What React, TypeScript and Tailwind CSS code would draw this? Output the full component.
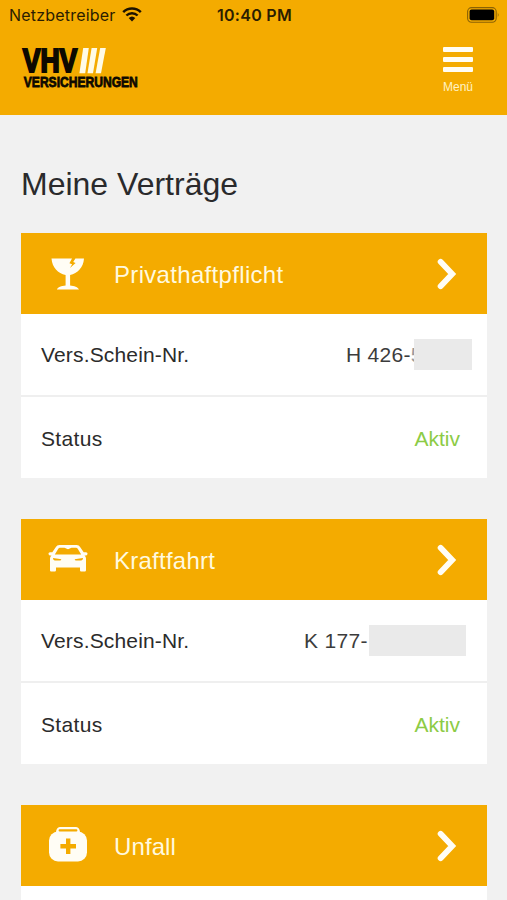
import { type ReactNode } from 'react';

type Contract = {
  title: string;
  titleClass: string;
  icon: ReactNode;
  number?: ReactNode;
};

function WifiIcon() {
  return (
    <svg width="20" height="15" viewBox="0 0 20 15" fill="none">
      <path d="M1.2 5.2A12.6 12.6 0 0 1 18.8 5.2" stroke="#1c1300" strokeWidth="2.5" />
      <path d="M4.4 8.5A8 8 0 0 1 15.6 8.5" stroke="#1c1300" strokeWidth="2.4" />
      <path d="M6.7 11.1A4.8 4.8 0 0 1 13.3 11.1L10 14.4Z" fill="#1c1300" />
    </svg>
  );
}

function BatteryIcon() {
  return (
    <svg width="33" height="16" viewBox="0 0 33 16" fill="none">
      <rect x="0.6" y="0.6" width="28.6" height="14.6" rx="4" stroke="#8a6205" strokeWidth="1.1" />
      <rect x="2.6" y="2.6" width="24.6" height="10.6" rx="2" fill="#000" />
      <path d="M30.8 5.6Q32.4 7.9 30.8 10.2Z" fill="#8a6205" />
    </svg>
  );
}

function Logo() {
  return (
    <svg
      className="overflow-visible"
      width="118"
      height="42"
      viewBox="0 0 118 42"
      fontFamily="'Liberation Sans', Arial, sans-serif"
      fontWeight="700"
    >
      <text x="1.8" y="25.3" fontSize="34" textLength="54.5" lengthAdjust="spacingAndGlyphs" fill="#0d0900" stroke="#0d0900" strokeWidth="2.2">VHV</text>
      <g fill="#fffbe6">
        <path d="M62.2 1H67.8L64.2 26.2H58.4Z" />
        <path d="M70.6 1H76.2L72 26.2H66.5Z" />
        <path d="M79.2 1H84.8L80 26.2H74.6Z" />
      </g>
      <text x="2.8" y="40.1" fontSize="15.2" textLength="114" lengthAdjust="spacingAndGlyphs" fill="#0d0900" stroke="#0d0900" strokeWidth="0.8">VERSICHERUNGEN</text>
    </svg>
  );
}

function GlassIcon() {
  return (
    <svg width="40" height="40" viewBox="0 0 40 40" fill="#fffdf5">
      <path d="M3.5 4.5H24L21.4 9.3L24.1 10.3L22 14.1L27.6 9L25.2 8L27.4 4.5H36C35.4 13.5 29.5 19.6 22.1 21V31.4C26.2 31.9 30 32.8 31 35.5H8.8C9.8 32.8 13.4 31.9 17.6 31.4V21C10 19.5 4.2 13.5 3.5 4.5Z" />
    </svg>
  );
}

function CarIcon() {
  return (
    <svg width="40" height="40" viewBox="0 1 40 40">
      <path
        fill="#fffdf5"
        fillRule="evenodd"
        d="M11.4 6H28.6C30.3 6 31.3 6.7 32.1 8L35.7 13.3H38C40 13.3 40 16.4 38 16.4H36.5C37.5 17.4 38 18.5 38 20V31C38 32 37.4 32.6 36.4 32.6H33.6C32.6 32.6 32 32 32 31V28.5H8V31C8 32 7.4 32.6 6.4 32.6H3.6C2.6 32.6 2 32 2 31V20C2 18.5 2.5 17.4 3.5 16.4H2C0 16.4 0 13.3 2 13.3H4.3L7.9 8C8.7 6.7 9.7 6 11.4 6ZM12 8.8C11.2 8.8 10.7 9.1 10.3 9.8L6.8 15.5H33.2L29.7 9.8C29.3 9.1 28.8 8.8 28 8.8H23.5L20 10.2L16.5 8.8Z"
      />
      <path d="M5 19L13.4 20.2L12.5 21.4H7C5.8 21.4 5 20.6 5 19ZM35 19L26.6 20.2L27.5 21.4H33C34.2 21.4 35 20.6 35 19Z" fill="#f4ab00" />
    </svg>
  );
}

function FirstAidIcon() {
  return (
    <svg width="40" height="40" viewBox="0 2 40 40">
      <path d="M8 9.5C8 4.8 9.4 3 13.4 3H26.6C30.6 3 32 4.8 32 9.5Z" fill="#fffdf5" />
      <rect x="1" y="7.5" width="38" height="30" rx="9" fill="#fffdf5" />
      <rect x="10.6" y="5.3" width="18.8" height="2.2" rx="1" fill="#f4ab00" />
      <path d="M18 14.5H22.4V20.1H28V24.4H22.4V30H18V24.4H12.4V20.1H18Z" fill="#f4ab00" />
    </svg>
  );
}

function ChevronIcon() {
  return (
    <svg width="20" height="32" viewBox="0 0 20 32" fill="none">
      <path d="M3.6 3.8L15.2 16L3.6 28.2" stroke="#fffdf5" strokeWidth="5.8" strokeLinecap="round" strokeLinejoin="miter" />
    </svg>
  );
}

const contracts: Contract[] = [
  {
    title: 'Privathaftpflicht',
    titleClass: 'tracking-[0.32px]',
    icon: <GlassIcon />,
    number: (
      <div className="relative flex h-[31px] w-[126px] items-center whitespace-nowrap text-[#3c3c3c] mr-[15px]">
        <span className="tracking-[0.3px]">
          H 426-<span className="text-[#999]">5</span>
        </span>
        <span className="absolute right-0 top-0 h-[31px] w-[58px] bg-[#eaeaea]" />
      </div>
    ),
  },
  {
    title: 'Kraftfahrt',
    titleClass: 'tracking-[0.25px]',
    icon: <CarIcon />,
    number: (
      <div className="mr-[21px] flex items-center">
        <span className="w-[65px] whitespace-nowrap tracking-[0.3px] text-[#3c3c3c]">K 177-</span>
        <span className="h-[31px] w-[97px] bg-[#eaeaea]" />
      </div>
    ),
  },
  {
    title: 'Unfall',
    titleClass: 'tracking-[0.1px]',
    icon: <FirstAidIcon />,
  },
];

function ContractCard({ title, titleClass, icon, number }: Contract) {
  return (
    <section className="h-[245px] w-[466px] shrink-0 bg-white">
      <div className="flex h-[81px] items-center bg-[#f4ab00] pl-[27px] pr-[30px]">
        {icon}
        <h2 className={`ml-[26px] flex-1 pt-[2px] text-[24px] leading-7 text-[#fff9df] ${titleClass}`}>{title}</h2>
        <ChevronIcon />
      </div>
      <div className="flex h-[83px] items-center justify-between border-b-2 border-[#efefef] pl-5 text-[21px] text-[#2b2b2b]">
        <span className="tracking-[0.16px]">Vers.Schein-Nr.</span>
        {number}
      </div>
      <div className="flex h-[81px] items-center justify-between pl-5 pr-[27px] pt-[2px] text-[21px] text-[#2b2b2b]">
        <span className="tracking-[0.35px]">Status</span>
        <span className="text-[#8ccb45]">Aktiv</span>
      </div>
    </section>
  );
}

export default function App() {
  return (
    <div className="flex h-[900px] w-[507px] flex-col overflow-hidden bg-[#f1f1f1] font-['Liberation_Sans',Arial,sans-serif]">
      <header className="h-[115px] shrink-0 bg-[#f4ab00]">
        {/* Status bar */}
        <div className="grid h-[29px] grid-cols-3 items-center pl-[9px] pr-[7px] font-['Inter',sans-serif] text-[16px] text-[#2b1d00]">
          <div className="flex items-center gap-[6px]">
            <span className="tracking-[0.2px]">Netzbetreiber</span>
            <WifiIcon />
          </div>
          <span className="text-center font-semibold tracking-[0.3px]">10:40 PM</span>
          <div className="flex justify-end">
            <BatteryIcon />
          </div>
        </div>

        <div className="flex items-start justify-between pl-[21px] pr-[34px] pt-[18px]">
          <Logo />
          <button className="flex w-[30px] flex-col items-center">
            <span className="flex w-full flex-col gap-[5px]">
              <span className="h-[5px] rounded-[1px] bg-[#fffdf5]" />
              <span className="h-[5px] rounded-[1px] bg-[#fffdf5]" />
              <span className="h-[5px] rounded-[1px] bg-[#fffdf5]" />
            </span>
            <span className="mt-[7px] text-[12px] leading-4 text-[#fff3c4]">Menü</span>
          </button>
        </div>
      </header>

      <main className="flex flex-col pl-[21px] pt-[50px]">
        <h1 className="mb-[31px] pt-px text-[32px] leading-9 text-[#2a2a2c]">Meine Verträge</h1>
        <div className="flex flex-col gap-[41px]">
          {contracts.map((contract) => (
            <ContractCard key={contract.title} {...contract} />
          ))}
        </div>
      </main>
    </div>
  );
}
